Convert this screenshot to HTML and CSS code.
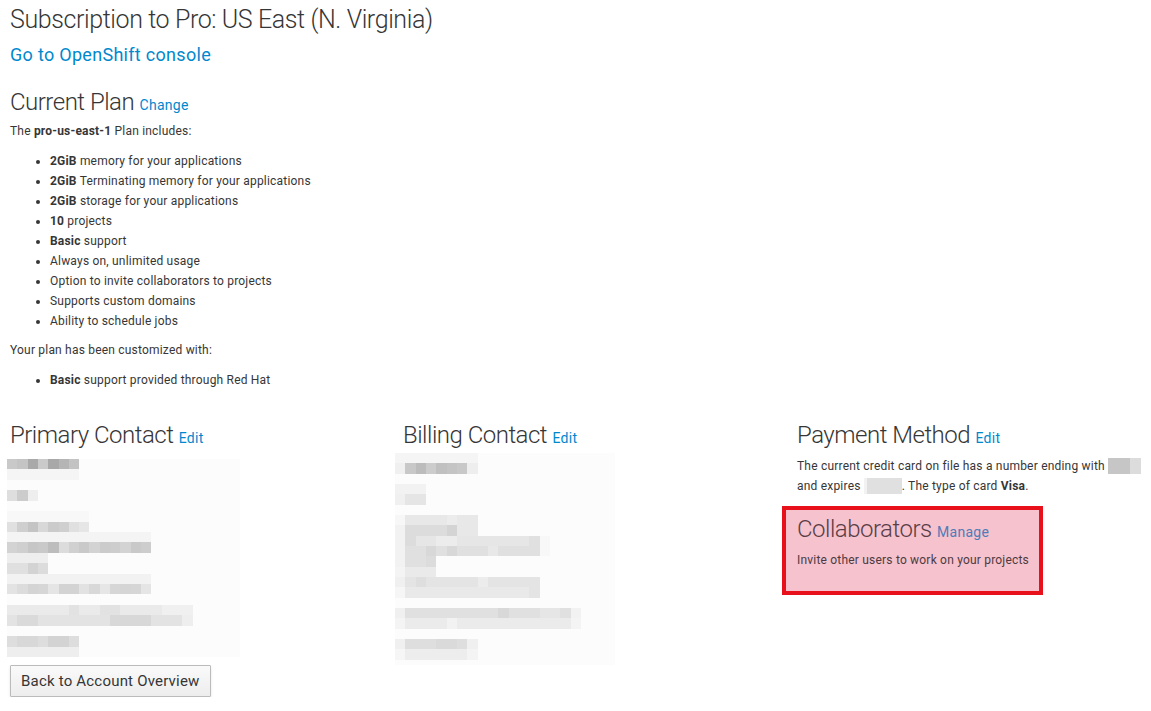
FILE: index.html
```html
<!DOCTYPE html>
<html>
<head>
<meta charset="utf-8">
<link rel="stylesheet" href="styles.css">
</head>
<body>
<div class="page">
  <h1 class="title">Subscription to Pro: US East (N. Virginia)</h1>
  <a class="console-link" href="#">Go to OpenShift console</a>

  <h2 class="section-title">Current Plan <a class="small-link" href="#">Change</a></h2>
  <p class="text">The <b>pro-us-east-1</b> Plan includes:</p>
  <ul class="plan-list">
    <li><b>2GiB</b> memory for your applications</li>
    <li><b>2GiB</b> Terminating memory for your applications</li>
    <li><b>2GiB</b> storage for your applications</li>
    <li><b>10</b> projects</li>
    <li><b>Basic</b> support</li>
    <li>Always on, unlimited usage</li>
    <li>Option to invite collaborators to projects</li>
    <li>Supports custom domains</li>
    <li>Ability to schedule jobs</li>
  </ul>
  <p class="text custom">Your plan has been customized with:</p>
  <ul class="plan-list">
    <li><b>Basic</b> support provided through Red Hat</li>
  </ul>

  <div class="columns">
    <div class="col">
      <h2 class="section-title">Primary Contact <a class="small-link" href="#">Edit</a></h2>
      <svg class="blur blur-primary" width="233" height="198" viewBox="0 0 22.6 19" preserveAspectRatio="none" shape-rendering="crispEdges">
        <rect x="0" y="0" width="22.6" height="19" fill="#fcfcfc"/>
        <rect x="0" y="0" width="1" height="1" fill="#c9c9c9"/><rect x="1" y="0" width="1" height="1" fill="#c4c4c4"/><rect x="2" y="0" width="1" height="1" fill="#a9a9a9"/><rect x="3" y="0" width="1" height="1" fill="#cacaca"/><rect x="4" y="0" width="1" height="1" fill="#a8a8a8"/><rect x="5" y="0" width="1" height="1" fill="#b5b5b5"/><rect x="6" y="0" width="1" height="1" fill="#c3c3c3"/>
        <rect x="0" y="1" width="7" height="1" fill="#f5f5f5"/>
        <rect x="0" y="3" width="1" height="1" fill="#dedede"/><rect x="1" y="3" width="1" height="1" fill="#cccccc"/><rect x="2" y="3" width="1" height="1" fill="#eeeeee"/>
        <rect x="0" y="5" width="8" height="1" fill="#f8f8f8"/>
        <rect x="0" y="6" width="1" height="1" fill="#e0e0e0"/><rect x="1" y="6" width="1" height="1" fill="#cfcfcf"/><rect x="2" y="6" width="1" height="1" fill="#c4c4c4"/><rect x="3" y="6" width="1" height="1" fill="#d8d8d8"/><rect x="4" y="6" width="1" height="1" fill="#cbcbcb"/><rect x="5" y="6" width="1" height="1" fill="#cfcfcf"/><rect x="6" y="6" width="1" height="1" fill="#e0e0e0"/><rect x="7" y="6" width="1" height="1" fill="#e6e6e6"/>
        <rect x="0" y="7" width="14" height="1" fill="#f4f4f4"/>
        <rect x="0" y="8" width="1" height="1" fill="#d3d3d3"/><rect x="1" y="8" width="1" height="1" fill="#cfcfcf"/><rect x="2" y="8" width="1" height="1" fill="#c6c6c6"/><rect x="3" y="8" width="1" height="1" fill="#c9c9c9"/><rect x="4" y="8" width="1" height="1" fill="#bdbdbd"/><rect x="5" y="8" width="1" height="1" fill="#dcdcdc"/><rect x="6" y="8" width="1" height="1" fill="#d0d0d0"/><rect x="7" y="8" width="1" height="1" fill="#c9c9c9"/><rect x="8" y="8" width="1" height="1" fill="#d3d3d3"/><rect x="9" y="8" width="1" height="1" fill="#cbcbcb"/><rect x="10" y="8" width="1" height="1" fill="#cdcdcd"/><rect x="11" y="8" width="1" height="1" fill="#d3d3d3"/><rect x="12" y="8" width="1" height="1" fill="#c9c9c9"/><rect x="13" y="8" width="1" height="1" fill="#cdcdcd"/>
        <rect x="0" y="9" width="4" height="1" fill="#eeeeee"/>
        <rect x="0" y="10" width="1" height="1" fill="#e0e0e0"/><rect x="1" y="10" width="1" height="1" fill="#e0e0e0"/><rect x="2" y="10" width="1" height="1" fill="#d3d3d3"/><rect x="3" y="10" width="1" height="1" fill="#dcdcdc"/>
        <rect x="0" y="11" width="14" height="1" fill="#f2f2f2"/>
        <rect x="0" y="12" width="1" height="1" fill="#e3e3e3"/><rect x="1" y="12" width="1" height="1" fill="#dcdcdc"/><rect x="2" y="12" width="1" height="1" fill="#d4d4d4"/><rect x="3" y="12" width="1" height="1" fill="#d6d6d6"/><rect x="4" y="12" width="1" height="1" fill="#e5e5e5"/><rect x="5" y="12" width="1" height="1" fill="#d3d3d3"/><rect x="6" y="12" width="1" height="1" fill="#d3d3d3"/><rect x="7" y="12" width="1" height="1" fill="#e2e2e2"/><rect x="8" y="12" width="1" height="1" fill="#d8d8d8"/><rect x="9" y="12" width="1" height="1" fill="#e6e6e6"/><rect x="10" y="12" width="1" height="1" fill="#d6d6d6"/><rect x="11" y="12" width="1" height="1" fill="#d5d5d5"/><rect x="12" y="12" width="1" height="1" fill="#d6d6d6"/><rect x="13" y="12" width="1" height="1" fill="#e5e5e5"/>
        <rect x="0" y="14" width="18" height="1" fill="#eaeaea"/><rect x="6" y="14" width="1" height="1" fill="#e2e2e2"/><rect x="9" y="14" width="2" height="1" fill="#e2e2e2"/><rect x="15" y="14" width="3" height="1" fill="#f0f0f0"/>
        <rect x="0" y="15" width="18" height="1" fill="#e3e3e3"/><rect x="1" y="15" width="2" height="1" fill="#dadada"/><rect x="10" y="15" width="4" height="1" fill="#d8d8d8"/><rect x="17" y="15" width="1" height="1" fill="#eeeeee"/>
        <rect x="0" y="17" width="1" height="1" fill="#dddddd"/><rect x="1" y="17" width="1" height="1" fill="#d8d8d8"/><rect x="2" y="17" width="1" height="1" fill="#d8d8d8"/><rect x="3" y="17" width="1" height="1" fill="#dddddd"/><rect x="4" y="17" width="1" height="1" fill="#d3d3d3"/><rect x="5" y="17" width="1" height="1" fill="#d3d3d3"/><rect x="6" y="17" width="1" height="1" fill="#dddddd"/>
        <rect x="0" y="18" width="7" height="1" fill="#eeeeee"/>
      </svg>
    </div>
    <div class="col">
      <h2 class="section-title">Billing Contact <a class="small-link" href="#">Edit</a></h2>
      <svg class="blur blur-billing" width="220" height="212" viewBox="0 0 21.3 20.5" preserveAspectRatio="none" shape-rendering="crispEdges">
        <rect x="0" y="0" width="21.3" height="20.5" fill="#fcfcfc"/>
        <rect x="0" y="0" width="8" height="1" fill="#f5f5f5"/>
        <rect x="0" y="1" width="1" height="1" fill="#f0f0f0"/><rect x="1" y="1" width="1" height="1" fill="#c8c8c8"/><rect x="2" y="1" width="1" height="1" fill="#bcbcbc"/><rect x="3" y="1" width="1" height="1" fill="#cccccc"/><rect x="4" y="1" width="1" height="1" fill="#c0c0c0"/><rect x="5" y="1" width="1" height="1" fill="#c4c4c4"/><rect x="6" y="1" width="1" height="1" fill="#c8c8c8"/><rect x="7" y="1" width="1" height="1" fill="#eeeeee"/>
        <rect x="0" y="3" width="3" height="1" fill="#f2f2f2"/>
        <rect x="0" y="4" width="1" height="1" fill="#f0f0f0"/><rect x="1" y="4" width="2" height="1" fill="#e5e5e5"/>
        <rect x="0" y="6" width="8" height="1" fill="#e8e8e8"/><rect x="0" y="6" width="1" height="1" fill="#f7f7f7"/><rect x="5" y="6" width="1" height="1" fill="#ececec"/>
        <rect x="0" y="7" width="8" height="1" fill="#dcdcdc"/><rect x="0" y="7" width="1" height="1" fill="#f2f2f2"/><rect x="5" y="7" width="1" height="1" fill="#d4d4d4"/><rect x="6" y="7" width="2" height="1" fill="#e8e8e8"/>
        <rect x="0" y="8" width="14" height="1" fill="#e6e6e6"/><rect x="0" y="8" width="1" height="1" fill="#f2f2f2"/><rect x="1" y="8" width="1" height="1" fill="#dcdcdc"/><rect x="4" y="8" width="2" height="1" fill="#ececec"/><rect x="13" y="8" width="1" height="1" fill="#e0e0e0"/><rect x="14" y="8" width="1" height="1" fill="#f8f8f8"/>
        <rect x="0" y="9" width="14" height="1" fill="#e0e0e0"/><rect x="0" y="9" width="1" height="1" fill="#f2f2f2"/><rect x="3" y="9" width="1" height="1" fill="#d8d8d8"/><rect x="5" y="9" width="1" height="1" fill="#d8d8d8"/><rect x="9" y="9" width="1" height="1" fill="#e8e8e8"/><rect x="14" y="9" width="1" height="1" fill="#f8f8f8"/>
        <rect x="0" y="10" width="4" height="1" fill="#e0e0e0"/><rect x="0" y="10" width="1" height="1" fill="#f2f2f2"/><rect x="3" y="10" width="1" height="1" fill="#dcdcdc"/>
        <rect x="0" y="11" width="4" height="1" fill="#eaeaea"/><rect x="0" y="11" width="1" height="1" fill="#f4f4f4"/>
        <rect x="0" y="12" width="14" height="1" fill="#e4e4e4"/><rect x="0" y="12" width="1" height="1" fill="#f0f0f0"/><rect x="2" y="12" width="1" height="1" fill="#dedede"/><rect x="8" y="12" width="1" height="1" fill="#ececec"/>
        <rect x="0" y="13" width="14" height="1" fill="#e9e9e9"/><rect x="0" y="13" width="1" height="1" fill="#f6f6f6"/><rect x="13" y="13" width="1" height="1" fill="#e4e4e4"/>
        <rect x="0" y="15" width="18" height="1" fill="#e0e0e0"/><rect x="0" y="15" width="1" height="1" fill="#f0f0f0"/><rect x="10" y="15" width="1" height="1" fill="#d8d8d8"/><rect x="14" y="15" width="2" height="1" fill="#e6e6e6"/><rect x="17" y="15" width="1" height="1" fill="#f2f2f2"/>
        <rect x="0" y="16" width="18" height="1" fill="#ebebeb"/><rect x="0" y="16" width="1" height="1" fill="#f4f4f4"/><rect x="5" y="16" width="1" height="1" fill="#f2f2f2"/><rect x="17" y="16" width="1" height="1" fill="#f4f4f4"/>
        <rect x="0" y="18" width="8" height="1" fill="#dedede"/><rect x="0" y="18" width="1" height="1" fill="#f0f0f0"/><rect x="4" y="18" width="2" height="1" fill="#dadada"/><rect x="7" y="18" width="1" height="1" fill="#f0f0f0"/>
        <rect x="0" y="19" width="8" height="1" fill="#ededed"/><rect x="0" y="19" width="1" height="1" fill="#f6f6f6"/><rect x="7" y="19" width="1" height="1" fill="#f4f4f4"/>
      </svg>
    </div>
    <div class="col">
      <h2 class="section-title">Payment Method <a class="small-link" href="#">Edit</a></h2>
      <p class="text payment">The current credit card on file has a number ending with <span class="redact redact-num"></span> and expires <span class="redact redact-exp"></span>. The type of card <b>Visa</b>.</p>
      <div class="collab">
        <h2 class="section-title collab-title">Collaborators <a class="small-link collab-link" href="#">Manage</a></h2>
        <p class="text collab-text">Invite other users to work on your projects</p>
      </div>
    </div>
  </div>

  <button class="btn" type="button">Back to Account Overview</button>
</div>
</body>
</html>
```
FILE: styles.css
```css
html, body {
  margin: 0;
  padding: 0;
  background: #fff;
}
body {
  font-family: Roboto, "Open Sans", sans-serif;
  color: #363636;
}
.page {
  padding-left: 10px;
}
a {
  color: #0088ce;
  text-decoration: none;
}
.title {
  margin: 5px 0 0;
  font-size: 25px;
  line-height: 30px;
  font-weight: 300;
  letter-spacing: -0.4px;
  color: #363636;
}
.console-link {
  display: block;
  margin-top: 8px;
  font-size: 18px;
  line-height: 24px;
  letter-spacing: 0.3px;
  width: max-content;
}
.section-title {
  margin: 0;
  font-size: 24px;
  line-height: 28px;
  font-weight: 300;
  letter-spacing: -0.5px;
  color: #363636;
}
.page > .section-title {
  margin-top: 21px;
}
.small-link {
  font-size: 14px;
  line-height: 1;
  font-weight: 400;
  letter-spacing: 0.3px;
}
.text {
  margin: 5px 0 0;
  font-size: 12px;
  line-height: 20px;
  letter-spacing: 0.2px;
}
.text.custom {
  margin-top: 9px;
}
.plan-list {
  margin: 10px 0 0;
  padding-left: 40px;
  font-size: 12px;
  line-height: 20px;
  letter-spacing: 0.2px;
}
.columns {
  display: grid;
  grid-template-columns: 393px 394px 1fr;
  margin-top: 31px;
}
.blur {
  display: block;
}
.blur-primary {
  margin: 10px 0 0 -3px;
}
.blur-billing {
  margin: 4px 0 0 -8px;
}
.payment {
  margin-top: 7px;
  padding-right: 2px;
}
.redact {
  display: inline-block;
  height: 16px;
  vertical-align: -4px;
}
.redact-num {
  width: 33px;
  background: linear-gradient(to right, #c6c6c6 0 22px, #dcdcdc 22px);
}
.redact-exp {
  width: 38px;
  background: linear-gradient(to right, #f2f2f2 0 3px, #e0e0e0 3px);
}
.collab {
  box-sizing: border-box;
  width: 261px;
  margin: 10px 0 0 -15px;
  padding: 5px 0 21px 11px;
  border: 4px solid #e8111b;
  background: #f5c2ce;
}
.collab-title {
  color: #5a3e47;
}
.collab-link {
  color: #4e7cb8;
}
.collab-text {
  margin-top: 7px;
  color: #4d3a41;
  white-space: nowrap;
}
.btn {
  display: block;
  margin: 0;
  padding: 5px 10px;
  font-family: Roboto, "Open Sans", sans-serif;
  font-size: 15px;
  line-height: 20px;
  letter-spacing: 0.2px;
  color: #363636;
  background: linear-gradient(#fafafa, #ededed);
  border: 1px solid #bbbbbb;
  border-radius: 1px;
  box-shadow: 0 2px 3px rgba(3, 3, 3, 0.1);
}
```
